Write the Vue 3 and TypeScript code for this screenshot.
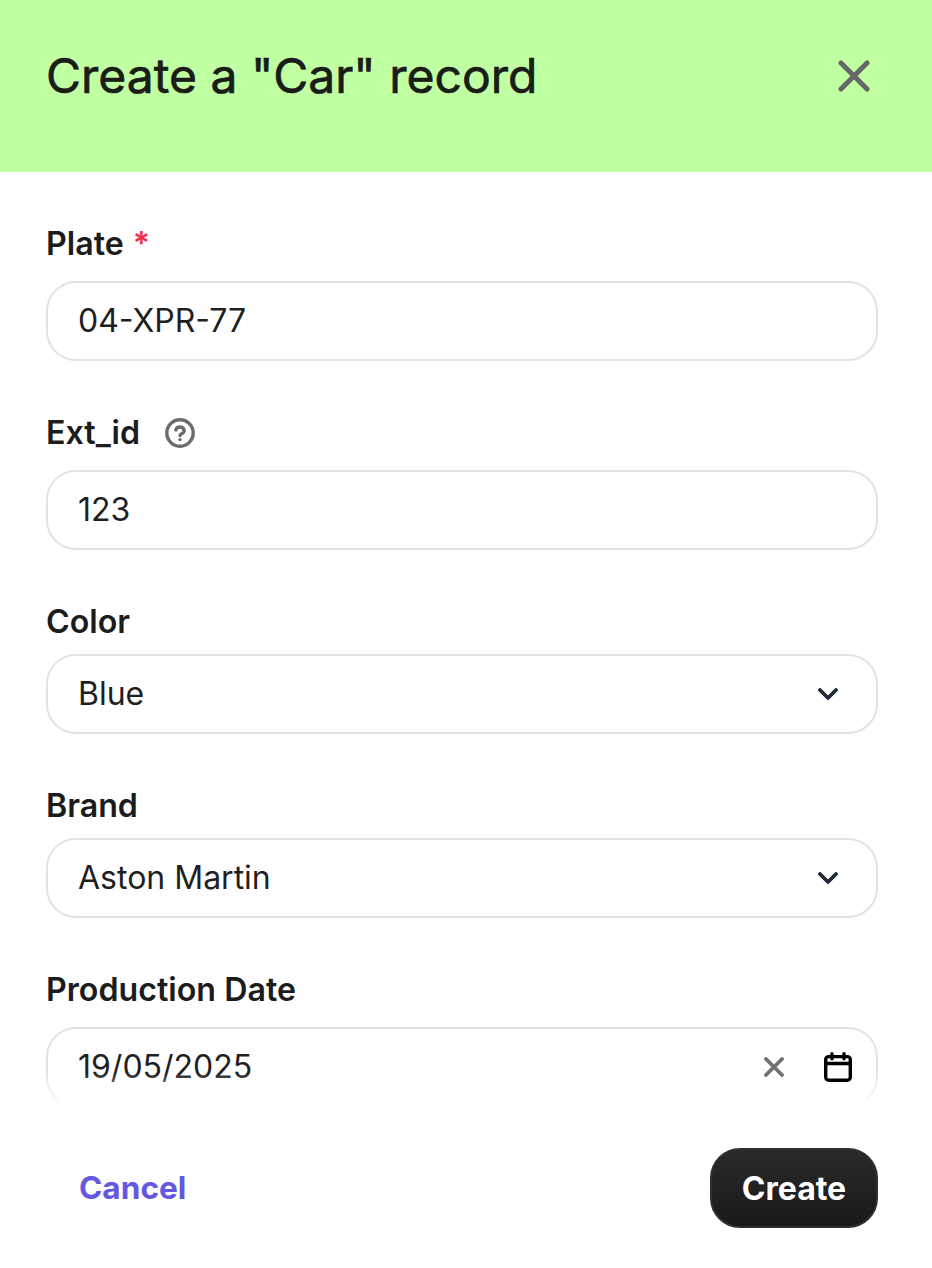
<script setup lang="ts">
</script>

<template>
  <div class="modal">
    <header class="head">
      <h1 class="title">Create a "Car" record</h1>
      <button class="close" aria-label="Close">
        <svg width="32" height="32" viewBox="0 0 32 32" fill="none"><path d="M3 3 L29 29 M29 3 L3 29" stroke="#666" stroke-width="5" stroke-linecap="round"/></svg>
      </button>
    </header>
    <div class="form">
      <div class="field tall">
        <div class="label">Plate <span class="req">*</span></div>
        <div class="input"><span>04-XPR-77</span></div>
      </div>
      <div class="field tall">
        <div class="label">Ext_id
          <svg class="help" width="30" height="30" viewBox="0 0 30 30" fill="none" stroke="#6b6b6b" stroke-width="3.4" stroke-linecap="round" stroke-linejoin="round"><circle cx="15" cy="15" r="13.2"/><path d="M10.8 12a4.3 4.3 0 0 1 8.4 1c0 2.6-4.2 2.8-4.2 4.6"/><path d="M15 21.6h.01"/></svg>
        </div>
        <div class="input"><span>123</span></div>
      </div>
      <div class="field">
        <div class="label">Color</div>
        <div class="input"><span>Blue</span>
          <svg class="chev" width="20" height="12" viewBox="0 0 20 12" fill="none" stroke="#1f2937" stroke-width="3.8" stroke-linecap="round" stroke-linejoin="round"><path d="M2 2l8 8 8-8"/></svg>
        </div>
      </div>
      <div class="field">
        <div class="label">Brand</div>
        <div class="input"><span>Aston Martin</span>
          <svg class="chev" width="20" height="12" viewBox="0 0 20 12" fill="none" stroke="#1f2937" stroke-width="3.8" stroke-linecap="round" stroke-linejoin="round"><path d="M2 2l8 8 8-8"/></svg>
        </div>
      </div>
      <div class="field tall last">
        <div class="label">Production Date</div>
        <div class="input date"><span>19/05/2025</span>
          <svg class="x" width="20" height="20" viewBox="0 0 20 20" fill="none"><path d="M2 2 L18 18 M18 2 L2 18" stroke="#707070" stroke-width="3.8" stroke-linecap="round"/></svg>
          <svg class="cal" width="28" height="30" viewBox="0 0 28 30" fill="none" stroke="#000" stroke-width="3.4" stroke-linecap="round" stroke-linejoin="round"><rect x="1.7" y="4.6" width="24.6" height="23.7" rx="3"/><path d="M8 1.7v5M20 1.7v5M1.7 11.5h24.6"/></svg>
        </div>
        <div class="fade"></div>
      </div>
    </div>
    <footer class="foot">
      <a class="cancel">Cancel</a>
      <button class="create">Create</button>
    </footer>
  </div>
</template>

<style scoped>
.modal { width: 932px; height: 1268px; background: #fff; font-family: Inter, "Liberation Sans", sans-serif; color: #1c1c1c; overflow: hidden; display: flex; flex-direction: column; }
.head { height: 172px; flex: none; background: #c1ffa3; display: flex; justify-content: space-between; align-items: flex-start; padding: 46px 62px 0 46px; box-sizing: border-box; }
.title { margin: 0; font-size: 48px; line-height: 60px; font-weight: 400; color: #1a1c18; -webkit-text-stroke: 0.7px #1a1c18; }
.close { border: 0; background: none; padding: 0; margin: 14px 0 0; width: 32px; height: 32px; }
.form { height: 928px; flex: none; padding: 52px 54px 0 46px; box-sizing: border-box; overflow: hidden; display: flex; flex-direction: column; gap: 52px; }
.field { display: flex; flex-direction: column; gap: 12px; flex: none; }
.tall { gap: 17px; }
.last { position: relative; }
.label { height: 40px; display: flex; align-items: center; font-size: 32.2px; font-weight: 630; line-height: 40px; gap: 9px; }
.req { color: #f5304f; }
.help { margin-left: 16px; }
.input { height: 80px; border: 2px solid #e3e3e3; border-radius: 30px; box-sizing: border-box; display: flex; align-items: center; padding: 0 24px 0 30px; font-size: 32px; color: #1f1f1f; }
.input span { flex: 1; margin-bottom: 2px; }
.chev { margin-right: 14px; }
.x { margin-right: 40px; }
.x, .cal { position: relative; z-index: 1; }
.fade { position: absolute; left: 0; right: 0; bottom: 0; height: 34px; background: linear-gradient(to bottom, rgba(255,255,255,0), #fff); }
.foot { flex: 1; display: flex; justify-content: space-between; align-items: flex-start; padding: 48px 54px 0 79px; }
.cancel { font-size: 31.6px; font-weight: 650; color: #6558e0; line-height: 80px; }
.create { width: 168px; height: 80px; border-radius: 30px; border: 2px solid #2f2f2f; background: linear-gradient(#2a2a2a, #191919); color: #fff; font: 680 32px Inter, sans-serif; }
</style>
